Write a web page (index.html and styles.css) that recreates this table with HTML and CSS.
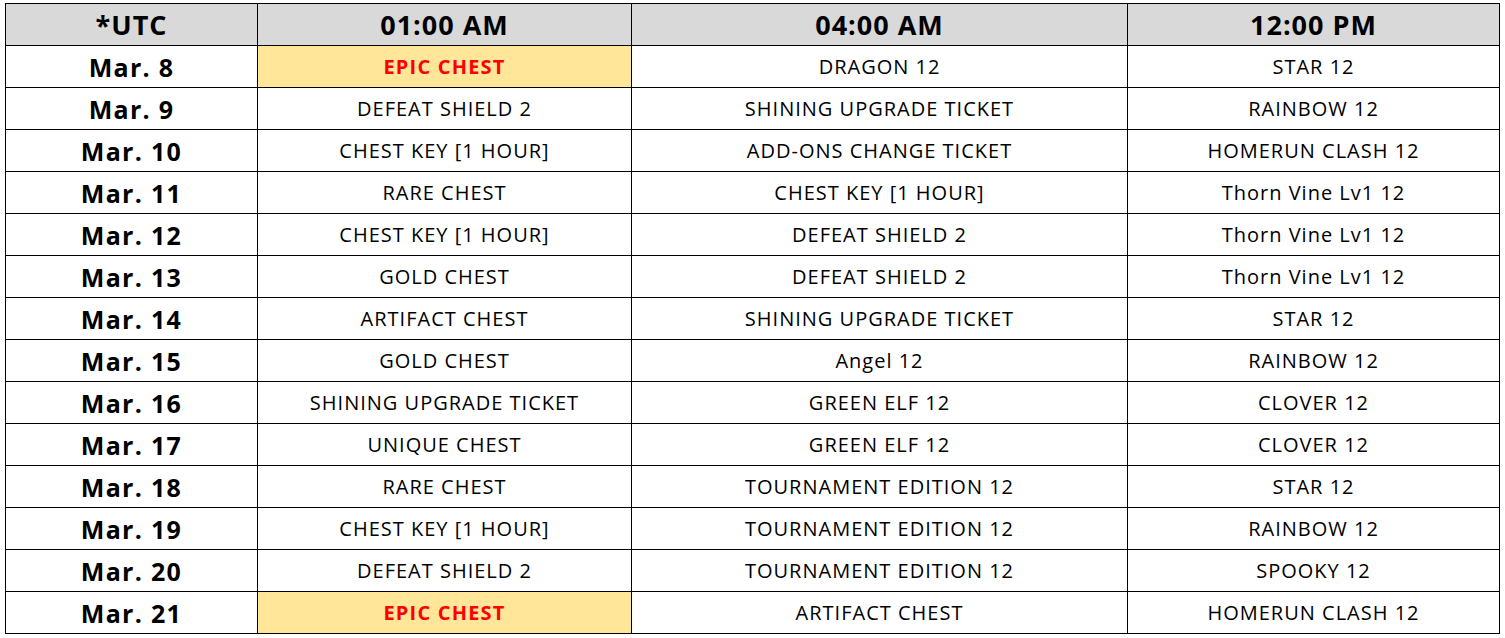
FILE: index.html
```html
<!DOCTYPE html>
<html>
<head>
<meta charset="utf-8">
<link rel="stylesheet" href="styles.css">
</head>
<body>
<table class="sched">
  <colgroup>
    <col class="c-date"><col class="c-1"><col class="c-2"><col class="c-3">
  </colgroup>
  <thead>
    <tr><th>*UTC</th><th>01:00 AM</th><th>04:00 AM</th><th>12:00 PM</th></tr>
  </thead>
  <tbody>
    <tr><td class="date">Mar. 8</td><td class="epic">EPIC CHEST</td><td>DRAGON 12</td><td>STAR 12</td></tr>
    <tr><td class="date">Mar. 9</td><td>DEFEAT SHIELD 2</td><td>SHINING UPGRADE TICKET</td><td>RAINBOW 12</td></tr>
    <tr><td class="date">Mar. 10</td><td>CHEST KEY [1 HOUR]</td><td>ADD-ONS CHANGE TICKET</td><td>HOMERUN CLASH 12</td></tr>
    <tr><td class="date">Mar. 11</td><td>RARE CHEST</td><td>CHEST KEY [1 HOUR]</td><td>Thorn Vine Lv1 12</td></tr>
    <tr><td class="date">Mar. 12</td><td>CHEST KEY [1 HOUR]</td><td>DEFEAT SHIELD 2</td><td>Thorn Vine Lv1 12</td></tr>
    <tr><td class="date">Mar. 13</td><td>GOLD CHEST</td><td>DEFEAT SHIELD 2</td><td>Thorn Vine Lv1 12</td></tr>
    <tr><td class="date">Mar. 14</td><td>ARTIFACT CHEST</td><td>SHINING UPGRADE TICKET</td><td>STAR 12</td></tr>
    <tr><td class="date">Mar. 15</td><td>GOLD CHEST</td><td>Angel 12</td><td>RAINBOW 12</td></tr>
    <tr><td class="date">Mar. 16</td><td>SHINING UPGRADE TICKET</td><td>GREEN ELF 12</td><td>CLOVER 12</td></tr>
    <tr><td class="date">Mar. 17</td><td>UNIQUE CHEST</td><td>GREEN ELF 12</td><td>CLOVER 12</td></tr>
    <tr><td class="date">Mar. 18</td><td>RARE CHEST</td><td>TOURNAMENT EDITION 12</td><td>STAR 12</td></tr>
    <tr><td class="date">Mar. 19</td><td>CHEST KEY [1 HOUR]</td><td>TOURNAMENT EDITION 12</td><td>RAINBOW 12</td></tr>
    <tr><td class="date">Mar. 20</td><td>DEFEAT SHIELD 2</td><td>TOURNAMENT EDITION 12</td><td>SPOOKY 12</td></tr>
    <tr><td class="date">Mar. 21</td><td class="epic">EPIC CHEST</td><td>ARTIFACT CHEST</td><td>HOMERUN CLASH 12</td></tr>
  </tbody>
</table>
</body>
</html>
```
FILE: styles.css
```css
html, body {
  margin: 0;
  padding: 0;
  background: #ffffff;
}
body {
  padding: 3px 0 0 5px;
  font-family: "Open Sans", "Noto Sans CJK KR", sans-serif;
  color: #000;
}
.sched {
  border-collapse: collapse;
  table-layout: fixed;
  width: 1494px;
}
.c-date { width: 252px; }
.c-1 { width: 374px; }
.c-2 { width: 496px; }
.c-3 { width: 372px; }
.sched th, .sched td {
  border: 1px solid #000;
  height: 42px;
  padding: 0;
  text-align: center;
  vertical-align: middle;
  box-sizing: border-box;
  white-space: nowrap;
}
.sched th {
  background: #d9d9d9;
  font-size: 27px;
  font-weight: 700;
  letter-spacing: 1px;
}
.sched td {
  font-size: 20px;
  font-weight: 400;
  letter-spacing: 1px;
}
.sched td.date {
  font-size: 25px;
  font-weight: 700;
  letter-spacing: 1.3px;
}
.sched td.epic {
  background: #ffe699;
  color: #ff0000;
  font-weight: 700;
  letter-spacing: 1.2px;
}
```
